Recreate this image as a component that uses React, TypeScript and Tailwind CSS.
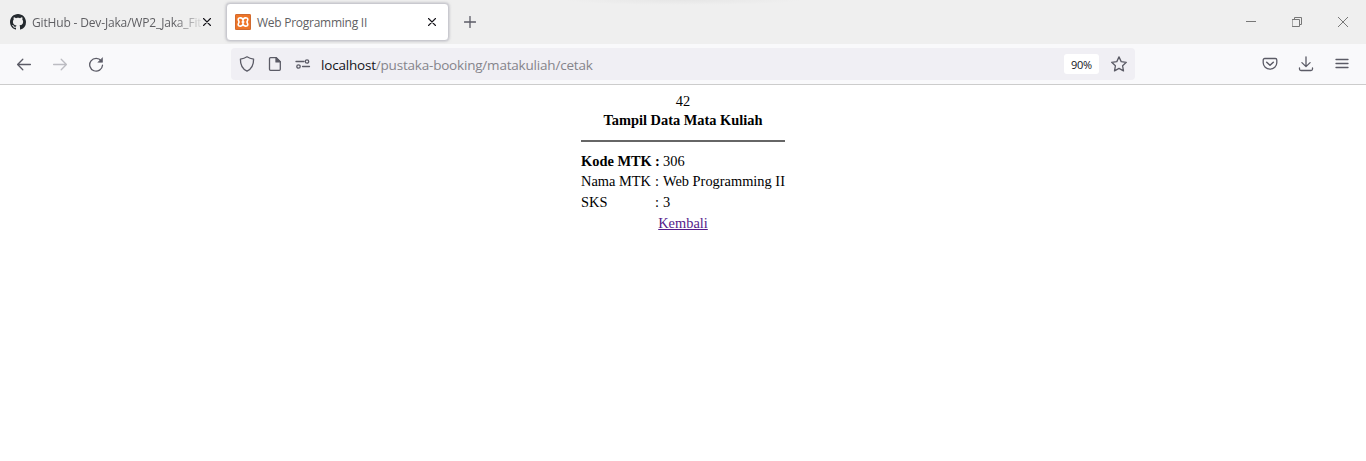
import React from "react";

const UI = "font-['Open_Sans','Noto_Sans',sans-serif]";

function Svg({ children, className = "", size = 16 }: { children: React.ReactNode; className?: string; size?: number }) {
  return (
    <svg
      width={size}
      height={size}
      viewBox={`0 0 ${size} ${size}`}
      fill="none"
      stroke="currentColor"
      strokeWidth="1.3"
      strokeLinecap="round"
      strokeLinejoin="round"
      className={`block shrink-0 ${className}`}
    >
      {children}
    </svg>
  );
}

function GitHubIcon() {
  return (
    <svg width="16" height="16" viewBox="0 0 16 16" fill="#24292e" className="block shrink-0">
      <path d="M8 0C3.58 0 0 3.58 0 8c0 3.54 2.29 6.53 5.47 7.59.4.07.55-.17.55-.38 0-.19-.01-.82-.01-1.49-2.01.37-2.53-.49-2.69-.94-.09-.23-.48-.94-.82-1.13-.28-.15-.68-.52-.01-.53.63-.01 1.08.58 1.23.82.72 1.21 1.87.87 2.33.66.07-.52.28-.87.51-1.07-1.78-.2-3.64-.89-3.64-3.95 0-.87.31-1.59.82-2.15-.08-.2-.36-1.02.08-2.12 0 0 .67-.21 2.2.82.64-.18 1.32-.27 2-.27s1.36.09 2 .27c1.53-1.04 2.2-.82 2.2-.82.44 1.1.16 1.92.08 2.12.51.56.82 1.27.82 2.15 0 3.07-1.87 3.75-3.65 3.95.29.25.54.73.54 1.48 0 1.07-.01 1.93-.01 2.2 0 .21.15.46.55.38A8.01 8.01 0 0 0 16 8c0-4.42-3.58-8-8-8z" />
    </svg>
  );
}

function XamppIcon() {
  return (
    <svg width="16" height="16" viewBox="0 0 16 16" fill="none" className="block shrink-0">
      <rect width="16" height="16" rx="1.5" fill="#ee7426" />
      <rect x=".5" y=".5" width="15" height="15" rx="1" stroke="#cf6a30" />
      <path
        d="M8 6.200C7.800 3.400 3.200 3 3.200 5.600c0 1.100.8 1.500.8 2.400s-.8 1.300-.8 2.400c0 2.600 4.600 2.200 4.800-.6.200 2.800 4.800 3.200 4.800.6 0-1.100-.8-1.500-.8-2.400s.8-1.300.8-2.400C12.800 3 8.200 3.400 8 6.200zM6.600 8h2.800M8 6.500v3"
        stroke="#fff"
        strokeWidth="1.600"
        strokeLinejoin="round"
      />
    </svg>
  );
}

function CloseIcon() {
  return (
    <Svg size={8} className="text-[#15141a]">
      <path d="M.5.5l7 7M7.500.5l-7 7" strokeWidth="1.1" />
    </Svg>
  );
}

function TabStrip() {
  return (
    <div className="flex h-11 bg-[#efefef]">
      <div className="flex h-11 w-[226px] items-center pl-[10px]">
        <GitHubIcon />
        <div className="ml-[6px] w-[169px] overflow-hidden whitespace-nowrap pt-[2px] text-[12px] tracking-[-0.16px] text-[#5f5f63] [mask-image:linear-gradient(to_right,black_142px,transparent_173px)]">
          GitHub - Dev-Jaka/WP2_Jaka_Fit
        </div>
        <div className="ml-[2px]">
          <CloseIcon />
        </div>
      </div>
      <div className="mt-[3px] flex h-[38px] w-[223px] items-center rounded-[4px] border border-[#c9c9cf] bg-white pr-[12px] pl-[8px] shadow-[0_0_3px_rgba(128,128,142,0.6)]">
        <XamppIcon />
        <div className="ml-[6px] flex-1 whitespace-nowrap pt-[2px] text-[12px] tracking-[-0.26px] text-[#5f5f63]">
          Web Programming II
        </div>
        <CloseIcon />
      </div>
      <div className="flex h-11 items-center pl-[15px] text-[#5b5b66]">
        <Svg size={12}>
          <path d="M6 .5v11M.5 6h11" strokeWidth="1.3" />
        </Svg>
      </div>
      <div className="flex-1 pl-[87px]">
        <div className="h-[5px] w-[240px] bg-[radial-gradient(ellipse_at_top,#e6e6e6,#efefef_70%)]" />
      </div>
      <div className="flex h-11 items-center gap-[36px] pr-[18px] text-[#777]">
        <Svg size={10}>
          <path d="M0 4.500h10" strokeWidth="1" strokeLinecap="butt" />
        </Svg>
        <Svg size={10}>
          <path d="M.5 2.500h7v7h-7zM2.500 2.500v-2h7v7h-2" strokeWidth="1" strokeLinejoin="miter" />
        </Svg>
        <Svg size={10}>
          <path d="M0 0l10 10M10 0L0 10" strokeWidth="1" strokeLinecap="butt" />
        </Svg>
      </div>
    </div>
  );
}

function NavBar() {
  return (
    <div className="flex h-[41px] items-center border-b border-[#cccccc] bg-[#f9f9fb] text-[#5b5b66]">
      <div className="flex w-[231px] items-center gap-[20px] pl-[16px]">
        <Svg>
          <path d="M14.400 8.500H1.800M6.800 3.300L1.600 8.500l5.200 5.200" />
        </Svg>
        <Svg className="text-[#bcbcc2]">
          <path d="M1.600 8.500h12.600M9.200 3.300l5.200 5.200-5.200 5.200" />
        </Svg>
        <Svg>
          <path d="M13.300 5A6.400 6.400 0 1 0 14.500 9.200" />
          <path d="M14.500 2v4.300h-4.300z" fill="currentColor" strokeWidth=".6" />
        </Svg>
      </div>
      <div className="flex h-8 w-[904px] items-center rounded-[4px] bg-[#f0eff4] pr-[8px] pl-[8px]">
        <Svg>
          <path d="M8 .8c2 1.300 4.300 2 6.600 2.300C14.700 8.700 12.900 13 8 15.200 3.100 13 1.300 8.700 1.400 3.100 3.700 2.800 6 2.100 8 .8z" />
        </Svg>
        <Svg className="ml-[12px]">
          <path d="M3.500 1.700h5.800l4 4v7.600a1 1 0 0 1-1 1H3.500a1 1 0 0 1-1-1V2.700a1 1 0 0 1 1-1z" />
          <path d="M9 1.800v4.100h4.200z" fill="currentColor" />
        </Svg>
        <Svg className="ml-[12px]">
          <path d="M1 5.500h8M7.500 10.500H14.500" />
          <circle cx="12" cy="5.500" r="1.700" />
          <circle cx="3.500" cy="10.500" r="1.700" />
        </Svg>
        <div className="ml-[10px] flex-1 whitespace-nowrap pt-[2px] text-[13.500px] tracking-[-0.2px] text-[#85848b]">
          <span className="text-[#15141a]">localhost</span>/pustaka-booking/matakuliah/cetak
        </div>
        <div className="flex h-5 w-[35px] items-center justify-center rounded-[3px] bg-white pt-[2px] text-[11px] tracking-[-0.3px] text-[#15141a]">
          90%
        </div>
        <Svg className="ml-[12px]">
          <path d="M8 .9l2.200 4.700 5.100.7-3.700 3.500.9 5.100L8 12.400l-4.500 2.500.9-5.100L.7 6.300l5.100-.7z" />
        </Svg>
      </div>
      <div className="flex flex-1 items-center justify-end gap-[20px] pr-[16px]">
        <Svg>
          <path d="M2.700 2.500h10.600a1.500 1.500 0 0 1 1.500 1.500v2.800a6.800 6.300 0 0 1-13.600 0V4a1.500 1.500 0 0 1 1.500-1.500z" />
          <path d="M4.700 6.300L8 9.300l3.300-3" strokeWidth="1.500" />
        </Svg>
        <Svg>
          <path d="M8 .8v9.600M3.900 6.600L8 10.600l4.100-4M1.500 12v1a1.500 1.500 0 0 0 1.500 1.500h10a1.500 1.500 0 0 0 1.500-1.500v-1" />
        </Svg>
        <Svg>
          <path d="M2 3.500h12M2 7.500h12M2 11.500h12" strokeWidth="1.300" strokeLinecap="round" />
        </Svg>
      </div>
    </div>
  );
}

function CoursePage() {
  return (
    <main className="flex flex-col items-center pt-[8px] font-['Liberation_Serif',serif] text-[14.400px] leading-[17px] text-black">
      <div>42</div>
      <table className="w-[204px] border-collapse">
        <tbody>
          <tr className="h-[21px]">
            <th colSpan={3} className="p-0 text-center align-middle">Tampil Data Mata Kuliah</th>
          </tr>
          <tr className="h-[20px]">
            <td colSpan={3} className="p-0">
              <hr className="h-[2px] border-0 bg-[#666]" />
            </td>
          </tr>
          <tr className="h-[20px]">
            <th className="w-[74px] p-0 text-left">Kode MTK</th>
            <th className="w-[8px] p-0 text-left">:</th>
            <td className="p-0">306</td>
          </tr>
          <tr className="h-[21px]">
            <td className="p-0">Nama MTK</td>
            <td className="p-0">:</td>
            <td className="whitespace-nowrap p-0">Web Programming II</td>
          </tr>
          <tr className="h-[20px]">
            <td className="p-0">SKS</td>
            <td className="p-0">:</td>
            <td className="p-0">3</td>
          </tr>
          <tr className="h-[22px]">
            <td colSpan={3} className="p-0 text-center">
              <a href="#" className="text-[#551a8b] underline">Kembali</a>
            </td>
          </tr>
        </tbody>
      </table>
    </main>
  );
}

export default function App() {
  return (
    <div className="h-[461px] w-[1366px] overflow-hidden bg-white">
      <header className={UI}>
        <TabStrip />
        <NavBar />
      </header>
      <CoursePage />
    </div>
  );
}
